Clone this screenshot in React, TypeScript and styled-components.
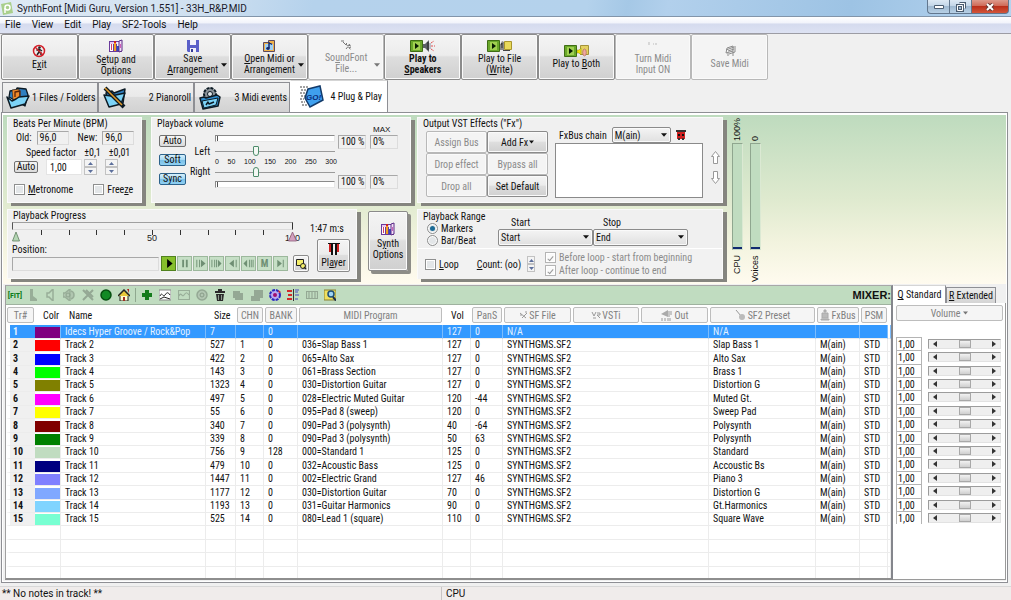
import React from "react";
import styled, { createGlobalStyle, css } from "styled-components";

const FONT = '"Liberation Sans Narrow", "Arial Narrow", "Roboto Condensed", "Liberation Sans", sans-serif';
const UI = 'Roboto, "Open Sans", sans-serif';
const ARIAL = '"Liberation Sans", Arial, sans-serif';
const GREEN = "#c0dcc0";

const Global = createGlobalStyle`
  *, *::before, *::after { box-sizing: border-box; }
  body { margin: 0; background: #f0f0f0; font: 10px/13px ${FONT}; color: #111; overflow: hidden; }
  button, input, select { font: inherit; color: inherit; margin: 0; padding: 0; border-radius: 0; }
  button { white-space: nowrap; }
  svg { display: block; flex: none; }
  u { text-underline-offset: 1px; }
`;

/* ---------- window frame ---------- */
const Window = styled.div`
  display: flex; flex-direction: column; height: 100vh; min-height: 560px; background: #f0f0f0;
`;
const TitleBar = styled.header`
  display: flex; align-items: center; flex: none; height: 17px; padding-left: 1px; gap: 4px;
  font: 10px/15px ${UI}; color: #1a1a2a;
  background: linear-gradient(100deg, #dfeaf4 0, #cfe0f0 20%, #b5d2ec 31%, #b4d2ec 58%, #a5c8e6 62%, #b2d0ec 66%, #9dc3e4 84%, #b5d3ee 100%);
  border-bottom: 1px solid #8295aa;
`;
const Title = styled.h1`margin: 0; font: inherit; flex: 1; white-space: nowrap;`;
const Caption = styled.div`display: flex; align-self: flex-start; margin-right: 2px;`;
const CaptionButton = styled.button<{ $close?: boolean }>`
  display: grid; place-items: center; height: 14px; width: ${p => (p.$close ? 38 : 22)}px;
  border: 1px solid #62778e; border-top: 0; border-right-width: ${p => (p.$close ? 1 : 0)}px;
  background: ${p => p.$close
    ? "linear-gradient(#dd9a8c 0, #cf6a58 45%, #bb2f1b 50%, #d3563a 100%)"
    : "linear-gradient(#dce8f3 0, #c3d6e8 45%, #9fb9d1 50%, #b7d0e6 100%)"};
  &:first-child { border-bottom-left-radius: 4px; }
  &:last-child { border-bottom-right-radius: 4px; }
`;
const MenuBar = styled.nav`
  display: flex; flex: none; height: 17px; padding-left: 5px; gap: 11px;
  font: 10px/16px ${UI}; border-bottom: 1px solid #9c9ca4;
  background: linear-gradient(#fff 0, #f2f4fb 35%, #d5dbee 45%, #dde2f3 100%);
`;
const MenuLink = styled.a`color: inherit; text-decoration: none;`;

/* ---------- main toolbar ---------- */
const Ribbon = styled.div`
  flex: none; display: grid; grid-template-columns: repeat(10, 1fr); width: 767px; height: 46px; margin-left: 1px;
`;
const Bevel = css`
  border: 1px solid #8b8b8b; border-radius: 2px;
  background: linear-gradient(#f4f4f4 0, #ececec 46%, #dedede 50%, #d0d0d0 100%);
  box-shadow: inset 0 0 0 1px #fafafa;
  &:disabled { background: #f4f4f4; border-color: #b8b8b8; color: #8b8b8b; }
`;
const RibbonButton = styled.button<{ $bold?: boolean }>`
  ${Bevel}
  display: flex; flex-direction: column; align-items: center; justify-content: center; gap: 1px;
  position: relative; line-height: 11px; font-weight: ${p => (p.$bold ? 700 : 400)};
`;
const DropArrow = styled.svg`position: absolute; right: 3px; top: 28px;`;

/* ---------- page tabs ---------- */
const Tabs = styled.div`flex: none; display: flex; align-items: flex-end; height: 32px; padding-left: 2px;`;
const Tab = styled.button<{ $active?: boolean }>`
  display: flex; align-items: center; justify-content: space-between;
  width: ${p => (p.$active ? 98 : 96)}px; height: ${p => (p.$active ? 32 : 30)}px;
  padding: ${p => (p.$active ? "0 5px 0 9px" : "0 2px 0 3px")};
  border: 1px solid #8e8f94; border-bottom: 0;
  background: ${p => (p.$active ? "#fff" : "linear-gradient(#f0f0f0 0, #eaeaea 46%, #dcdcdc 50%, #d2d2d2 100%)")};
  ${p => p.$active && css`border-color: #d5d5d5 #8e8f94 #fff #fff;`}
`;
const Page = styled.main`
  flex: 1; min-height: 0; display: flex; flex-direction: column; margin: 0 3px 3px 1px;
  border: 1px solid #8e8f94; background: #fff; padding: 2px 1px 1px;
`;
const Deck = styled.section`
  flex: none; display: flex; align-items: flex-start; gap: 6px; height: 169px; padding: 2px 4px 0;
  background: linear-gradient(#bedbbe 0, #dfeacf 50%, #f2f3de 75%, #fffbef 100%);
`;
const DeckColumn = styled.div`display: flex; flex-direction: column; gap: 6px;`;
const DeckRow = styled.div`display: flex; gap: 9px;`;

/* ---------- group boxes ---------- */
const Group = styled.section<{ $w: number; $h: number }>`
  width: ${p => p.$w}px; height: ${p => p.$h}px; background: #f0f0f0;
  border: 1px solid #fafafa; box-shadow: 4px 3px 0 #85857f;
`;
const GroupTitle = styled.h2`margin: 0; padding-left: 5px; font: inherit; line-height: 12px; white-space: nowrap;`;
const Row = styled.div<{ $h: number; $x?: number; $gap?: number; $top?: number }>`
  display: flex; align-items: center; height: ${p => p.$h}px; padding-left: ${p => p.$x ?? 0}px;
  gap: ${p => p.$gap ?? 0}px; margin-top: ${p => p.$top ?? 0}px; white-space: nowrap;
`;
const Sunken = styled.output<{ $w: number }>`
  display: block; width: ${p => p.$w}px; height: 14px; padding-left: 2px; line-height: 12px;
  border: 1px solid; border-color: #a8a8a8 #dcdcdc #dcdcdc #a8a8a8;
`;
const Field = styled.label`display: flex; align-items: center; gap: 5px; white-space: nowrap;`;
const SmallButton = styled.button<{ $on?: boolean; $w: number }>`
  width: ${p => p.$w}px; height: 12px; line-height: 10px; border: 1px solid ${p => (p.$on ? "#2c628b" : "#707070")}; border-radius: 2px;
  background: ${p => (p.$on ? "linear-gradient(#d6effb 0, #a5d8f3 48%, #7cc0e8 52%, #8fd0f2 100%)" : "linear-gradient(#f5f5f5, #dadada)")};
`;
const TextInput = styled.input`
  width: 36px; height: 16px; padding-left: 3px; border: 1px solid #e4e4e4; background: #fff;
`;
const Spin = styled.span<{ $w: number }>`
  display: grid; grid-template-rows: 8px 8px; width: ${p => p.$w}px;
  button { display: grid; place-items: center; border: 1px solid #c2c2c2; background: #f4f4f4; }
`;
const Check = styled.label<{ $off?: boolean }>`
  display: flex; align-items: center; gap: 3px; height: 13px; color: ${p => (p.$off ? "#8b8b8b" : "inherit")}; white-space: nowrap;
`;
const Box = styled.input`
  appearance: none; flex: none; width: 11px; height: 11px; border: 1px solid #8e8f8f;
  background: #e3e6e8; box-shadow: inset 0 0 0 1px #fff; display: grid; place-items: center;
  &:disabled { border-color: #b4b4b4; background: #fafafa; }
  &:checked::after { content: ""; width: 3px; height: 6px; border: solid #9a9a9a; border-width: 0 1px 1px 0; transform: rotate(40deg); }
  &[type="radio"] { border-radius: 50%; }
  &[type="radio"]:checked::after { width: 5px; height: 5px; border: 0; border-radius: 50%; background: #1d6b96; transform: none; }
`;

/* ---------- volume ---------- */
const VolumeBody = styled.div`display: flex; height: 72px; padding-left: 7px;`;
const Stack = styled.div<{ $w: number; $top?: number; $gap?: number }>`
  display: flex; flex-direction: column; flex: none; width: ${p => p.$w}px; padding-top: ${p => p.$top ?? 0}px; gap: ${p => p.$gap ?? 0}px;
`;
const ValueStack = styled.div`
  display: grid; grid-template-rows: 10px 14px 26px 14px; width: 32px; margin-top: -5px; padding-left: 3px;
  output:last-child { grid-row: 4; }
`;
const MaxLabel = styled.span`font: 8px/10px ${ARIAL}; padding-left: 3px;`;
const LevelBar = styled.div`
  height: 7px; border: 1px solid; border-color: #8a8a8a #e8e8e8 #e8e8e8 #8a8a8a; background: #fff;
  padding: 0 1px; &::before { content: ""; display: block; width: 1px; height: 5px; background: #555; }
`;
const Range = styled.input<{ $up?: boolean }>`
  appearance: none; display: block; width: 100%; height: 12px; background: linear-gradient(#9a9a9a, #9a9a9a) center / 100% 1px no-repeat;
  &::-webkit-slider-thumb {
    appearance: none; width: 6px; height: 10px; border: 1px solid #4d8c6b; background: #f4f8f4;
    border-radius: ${p => (p.$up ? "3px 3px 1px 1px" : "1px 1px 3px 3px")};
  }
`;
const Scale = styled.div`
  display: flex; justify-content: space-between; width: 122px; height: 9px; font-size: 7px; line-height: 9px; font-family: ${ARIAL};
`;

/* ---------- progress ---------- */
const ProgressBody = styled.div`display: flex; padding: 0 0 0 4px; height: 56px;`;
const Track = styled.div`height: 8px; width: 281px; border: 1px solid; border-color: #a0a0a0 #333 #dcdcdc #555;`;
const Transport = styled.div`display: flex; align-items: center; gap: 1px; margin-left: 2px;`;
const TransportButton = styled.button<{ $on?: boolean }>`
  display: grid; place-items: center; width: 15px; height: 15px; border: 1px solid ${p => (p.$on ? "#50821e" : "#9cb89c")};
  background: ${p => (p.$on ? "#86bf2c" : "#c6dfc6")}; color: ${p => (p.$on ? "#000" : "#6f8f74")};
`;
const Tool = styled.button<{ $w: number; $h: number }>`
  ${Bevel}
  display: flex; flex-direction: column; align-items: center; justify-content: center; gap: 2px;
  width: ${p => p.$w}px; height: ${p => p.$h}px; line-height: 11px;
`;
const Shadowed = styled(Tool)`margin: 2px 0 0 2px; box-shadow: inset 0 0 0 1px #fafafa, 3px 3px 0 #8d8d87;`;

/* ---------- effects and range ---------- */
const FxBody = styled.div`display: flex; padding-left: 8px;`;
const FxButtons = styled.div`display: grid; grid-template: repeat(3, 22px) / 61px 61px; margin-top: 1px;`;
const FxButton = styled.button`
  ${Bevel}
  display: flex; align-items: center; justify-content: center; gap: 1px;
`;
const FxBox = styled.div`height: 55px; width: 148px; border: 1px solid #8a8a8a; background: #fff;`;
const SelectWrap = styled.span<{ $w: number; $h: number }>`
  position: relative; display: block; width: ${p => p.$w}px; height: ${p => p.$h}px;
  select { ${Bevel} appearance: none; width: 100%; height: 100%; padding-left: 2px; background: linear-gradient(#f4f4f4, #e0e0e0); }
  svg { position: absolute; right: 4px; top: calc(50% - 2px); pointer-events: none; }
`;
const LoopPanel = styled.div`
  display: flex; align-items: center; height: 31px; margin-top: 1px; padding-left: 7px; border-top: 1px solid #fff; background: #f2f2f2;
`;
const MeterColumn = styled.div`
  display: flex; flex-direction: column; align-items: center; width: 10px; font: 10px/10px ${ARIAL};
`;
const Vertical = styled.span<{ $h: number; $end?: boolean }>`
  writing-mode: vertical-rl; transform: rotate(180deg); height: ${p => p.$h}px; line-height: 10px; font-size: 9px;
  text-align: ${p => (p.$end ? "left" : "right")}; padding-top: ${p => (p.$end ? 2 : 0)}px;
`;
const Meter = styled.div`
  width: 11px; height: 107px; border: 1px solid; border-color: #8fa68f #dbe9d3 #c8d8c8 #8fa68f; background: ${GREEN};
  display: flex; align-items: flex-end; margin-bottom: 5px;
  &::after { content: ""; height: 2px; flex: 1; background: #102a70; }
`;
const Meters = styled.div`display: flex; gap: 8px; margin-left: 3px;`;

/* ---------- track list ---------- */
const Lower = styled.section`flex: 1; min-height: 0; display: flex; background: #f0f0f0; padding-top: 1px;`;
const ListPane = styled.div`
  flex: 1; min-width: 0; display: flex; flex-direction: column; border: 1px solid #9a9a9a; border-width: 1px 2px 2px 1px;
  border-color: #a8a8a8 #84868c #8e8e8e #a0a0a0; margin: 0 0 1px 2px; background: #fff; overflow: hidden;
`;
const IconBar = styled.div`
  flex: none; display: flex; align-items: center; height: 19px; background: ${GREEN}; border-bottom: 1px solid #9fb29f;
`;
const IconGroup = styled.div<{ $n: number; $w: number }>`
  display: grid; grid-template-columns: repeat(${p => p.$n}, 1fr); width: ${p => p.$w}px;
`;
const IconButton = styled.button`
  display: grid; place-items: center; height: 17px; border: 0; background: none; color: #98ae98;
`;
const Fit = styled(IconButton)`width: 18px; font: bold 8px/17px ${FONT}; color: #0d7d1d;`;
const Divider = styled.i`width: 1px; height: 14px; margin: 0 2px; background: #8fa88f;`;
const MixerLabel = styled.span`margin-left: auto; font: bold 11px/17px ${ARIAL}; color: #111;`;

const rowHeights = css`
  height: 13px;
  &:nth-child(5n + 1), &:nth-child(5n + 3) { height: 14px; }
`;
const TrackTable = styled.table`
  width: 100%; table-layout: fixed; border-collapse: separate; border-spacing: 0; white-space: nowrap;
  th { height: 20px; padding: 1px; font-weight: 400; vertical-align: middle; }
  td { padding: 0 0 0 4px; line-height: 12px; border: solid #ececec; border-width: 0 1px 1px 0; overflow: hidden; }
`;
const PlainHead = styled.th`text-align: left; && { padding-left: 8px; }`;
const Tr = styled.tr<{ $selected?: boolean }>`
  ${rowHeights}
  ${p => p.$selected && css`
    background: #3399ff; color: #e4f2ff;
    td { border-right-color: #7cbcfc; }
    td:last-child { background: #fff; }
  `}
`;
const HeadButton = styled.button`
  display: flex; align-items: center; justify-content: center; gap: 1px; width: 100%; height: 16px;
  border: 1px solid #bdbdbd; border-radius: 2px; background: #f5f5f5; color: #808080; overflow: hidden;
`;
const Num = styled.td<{ $selected?: boolean; $filled: boolean }>`
  && { padding-left: 3px; font-weight: 700; border-right: 0; border-left: 4px solid #fff; background: ${p => (p.$selected ? "transparent" : p.$filled ? "#f0f0f0" : "#fff")}; }
`;
const Swatch = styled.i<{ $c: string }>`display: block; height: 11px; margin-top: 1px; background: ${p => p.$c};`;
const SwatchCell = styled.td`&& { padding: 0; }`;

/* ---------- mixer ---------- */
const MixerPane = styled.aside`flex: none; width: 113px; display: flex; flex-direction: column; margin-bottom: 1px;`;
const MixerTabs = styled.div`display: flex; align-items: flex-end; height: 18px;`;
const MixerTab = styled.button<{ $active?: boolean }>`
  height: ${p => (p.$active ? 18 : 16)}px; width: ${p => (p.$active ? 53 : 50)}px; border: 1px solid #8e8f94; border-bottom: 0;
  background: ${p => (p.$active ? "#fff" : "linear-gradient(#ececec, #d4d4d4)")};
  ${p => p.$active && css`border-color: #d5d5d5 #8e8f94 #fff #fff;`}
`;
const MixerBody = styled.div`
  flex: 1; background: #fff; border: 1px solid #9a9a9a; border-left: 0; border-width: 0 1px 1px 0; padding: 2px 2px 0 3px;
`;
const VolumeButton = styled(HeadButton)`margin-bottom: 2px; gap: 3px;`;
const Strips = styled.ul`list-style: none; margin: 0; padding: 0;`;
const Strip = styled.li`
  ${rowHeights}
  display: flex; align-items: center; justify-content: space-between;
`;
const Gain = styled.input`width: 26px; height: 100%; border: 1px solid #b4b4b4; border-bottom-width: 0; padding-left: 1px; background: #fff;`;
const Scroll = styled.div`
  display: flex; align-items: center; width: 73px; height: 10px; margin-right: 2px; padding: 0 4px; background: #efefef;
  border: 1px solid; border-color: #9c9c9c #e2e2e2 #e2e2e2 #9c9c9c;
  input { appearance: none; flex: 1; min-width: 0; height: 8px; background: none; }
  input::-webkit-slider-thumb { appearance: none; width: 12px; height: 8px; border: 1px solid #a8a8a8; background: linear-gradient(#f2f2f2, #cfcfcf); }
`;
const StatusBar = styled.footer`
  flex: none; display: flex; height: 14px; font: 10px/13px ${UI}; background: #f0eceb; border-top: 1px solid #d8d8d8;
`;
const StatusPart = styled.span<{ $w?: string }>`
  width: ${p => p.$w ?? "auto"}; padding-left: 2px; & + & { border-left: 1px solid #c8c4c4; padding-left: 4px; }
`;

/* ---------- helpers ---------- */
const Key = ({ t }: { t: string }) => {
  const i = t.indexOf("_");
  return i < 0 ? <>{t}</> : <>{t.slice(0, i)}<u>{t[i + 1]}</u>{t.slice(i + 2)}</>;
};
const Lines = ({ t }: { t: string }) => (
  <span>{t.split("|").map((l, i) => <React.Fragment key={l}>{i > 0 && <br />}<Key t={l} /></React.Fragment>)}</span>
);
const Down = ({ size = 7, c = "#111" }) => (
  <svg width={size} height="4" viewBox="0 0 7 4"><path d="M0 0h7L3.5 4z" fill={c} /></svg>
);
const Up = () => <svg width="5" height="3"><path d="M0 3h5L2.500 0z" fill="#5c6f9c" /></svg>;
const SpinBox = ({ w = 13, label }: { w?: number; label: string }) => (
  <Spin $w={w}>
    <button aria-label={`${label} up`}><Up /></button>
    <button aria-label={`${label} down`}><svg width="5" height="3"><path d="M0 0h5L2.500 3z" fill="#5c6f9c" /></svg></button>
  </Spin>
);
const Picker = ({ w, h, label, value }: { w: number; h: number; label: string; value: string }) => (
  <SelectWrap $w={w} $h={h}><select aria-label={label}><option>{value}</option></select><Down size={6} /></SelectWrap>
);

/* ---------- icons ---------- */
const ExitIcon = () => (
  <svg width="14" height="14" viewBox="0 0 14 14">
    <circle cx="7.500" cy="3.500" r="1.300" fill="#222" />
    <path d="M7 4.500v3.500l-2 3M7 8l2 1v2M7 5l3 2M7 5L4.500 6.500" stroke="#222" strokeWidth="1.500" fill="none" />
    <circle cx="7" cy="7" r="5.500" fill="none" stroke="#d3202a" strokeWidth="1.500" /><path d="M3 3l8 8" stroke="#d3202a" strokeWidth="1.300" />
  </svg>
);
const SetupIcon = () => (
  <svg width="14" height="14" viewBox="0 0 14 14">
    <path d="M0 2h13v11H0z" fill="#6a3a9c" /><path d="M1 3h8v2H1z" fill="#e9c8f0" /><path d="M1 5h3v7H1z" fill="#fff" />
    <path d="M2 5h1v6H2z" fill="#d33a68" /><path d="M5 4h2v8H5z" fill="#f0a020" /><path d="M8 3h2v4H8z" fill="#f5f0ff" /><path d="M8 7h2v5H8z" fill="#2a50c0" />
    <path d="M10 2l3-1v11l-3 1z" fill="#f3dff7" stroke="#5a2a86" /><path d="M11 5h1v4h-1z" fill="#d060b8" /><path d="M5 2h2v2H5z" fill="#d02020" />
  </svg>
);
const SaveIcon = () => (
  <svg width="12" height="12" viewBox="0 0 12 12"><path d="M0 0h12v12H1l-1-1z" fill="#5a5fc8" /><path d="M3 0h6v5H3zM3 8h6v4H3z" fill="#f2f2fa" /><path d="M4 9h2v3H4z" fill="#353a98" /></svg>
);
const OpenIcon = () => (
  <svg width="13" height="12" viewBox="0 0 13 12"><path d="M.5 2.500h5v-2h6v11H.5z" fill="#f0b24a" stroke="#5c4a60" /><path d="M2 4h8v6H2z" fill="#9fd0f5" /><path d="M6 2v6M6 2.500l3 2" stroke="#14286e" strokeWidth="1.500" fill="none" /><ellipse cx="5" cy="8.500" rx="1.800" ry="1.400" fill="#14286e" /></svg>
);
const FontIcon = () => (
  <svg width="11" height="11" viewBox="0 0 11 11" stroke="#777" fill="none"><path d="M0 1h3M2 2l3 3M4 5l2-2M5 4l5 6M5 9l4-5M7 5l3 1M8 8l2-1" strokeDasharray="3 1" /></svg>
);
const Speaker = () => (
  <svg width="12" height="12" viewBox="0 0 12 12"><path d="M0 4h2l4-4v12L2 8H0z" fill="#5d6068" /><path d="M5 2v8" stroke="#222" /><path d="M7 3v6" stroke="#889" /><path d="M8 3l3-2M8 6h4M8 9l3 2" stroke="#e05050" strokeDasharray="2 1" /></svg>
);
const PlayBox = styled.span`display: flex; align-items: center;`;
const PlayIcon = () => (
  <svg width="13" height="12" viewBox="0 0 13 12"><path d="M.5.500h12v11H.5z" fill="#6aa82a" stroke="#3f6d14" /><path d="M3 2h7v8H3z" fill="#a0d050" /><path d="M5 3l4 3-4 3z" fill="#071a02" /></svg>
);
const FolderMini = () => (
  <svg width="12" height="12" viewBox="0 0 12 12"><path d="M4.500 1.500h7v8h-7z" fill="#e8d95a" stroke="#a8952c" /><path d="M0 5l2-4 2 1v8H0z" fill="#8a8a8a" /><path d="M1 5l1-2v5" fill="none" stroke="#333" /><path d="M3 10h7v1H3z" fill="#444" /></svg>
);
const BothMini = () => (
  <svg width="12" height="12" viewBox="0 0 12 12"><path d="M3.500.500h8v9h-8z" fill="#e4d060" stroke="#a3923a" /><path d="M0 5h2l2-2v7L2 8H0z" fill="#f3e500" stroke="#8a8a20" strokeWidth=".5" /><ellipse cx="7.500" cy="7.500" rx="1.800" ry="3.500" fill="#f0a8a0" stroke="#a06050" strokeWidth=".6" /></svg>
);
const MidiInIcon = () => <svg width="10" height="12"><path d="M1 2v3M5 4h1M7 4h2" stroke="#bbb" fill="none" /></svg>;
const SaveMidiIcon = () => (
  <svg width="12" height="12" viewBox="0 0 12 12" stroke="#8c8c8c" fill="none"><path d="M3 3l6-2v5L2 8zM2 5l8-3M4 6l6-2M9 6v5M11 1v6L5 9M4 8v3" /></svg>
);
const FilesIcon = () => (
  <svg width="26" height="22" viewBox="0 0 26 22" stroke="#0c1a24" strokeLinejoin="round"><path d="M3 10l1-6 6-1 1-2 9 1 2 6-3 11z" fill="#2f7fc0" strokeWidth="1.300" /><path d="M6 3l7-1 1 9-7 2z" fill="#f08a2a" strokeWidth=".6" /><path d="M9 10V5l5-1v5" fill="none" stroke="#5a2408" strokeWidth="1.300" /><path d="M1 10l5 4 4-2 3-2 10-1-4 8-14 4z" fill="#7cd3f7" strokeWidth="1.500" /></svg>
);
const RollIcon = () => (
  <svg width="26" height="24" viewBox="0 0 26 24" stroke="#0c1a24" strokeLinejoin="round"><path d="M4 7l6-2 2 2 11-4-2 14-14 3z" fill="#2f7fc0" strokeWidth="1.500" /><path d="M2 9l7 1 14-3-4 11-12 3z" fill="#7cd3f7" strokeWidth="1.500" /><path d="M3 2l19 19" strokeWidth="4" /><path d="M3 2l17 17" stroke="#e09a2c" strokeWidth="1.600" /></svg>
);
const EventsIcon = () => (
  <svg width="24" height="24" viewBox="0 0 24 24" stroke="#0c1a24" strokeLinejoin="round"><circle cx="12" cy="8" r="6" fill="#8a9298" strokeWidth="2" strokeDasharray="3 1" /><circle cx="12" cy="8" r="2.500" fill="#dfe5e8" /><path d="M2 12l4-1 2 1 11-3 3 2-2 9-15 3z" fill="#2f8fd0" strokeWidth="1.500" /><path d="M4 15l16-3-2 7-12 3z" fill="#7cd3f7" strokeWidth="1" /><path d="M8 19l2-3 1 2 5-2" fill="none" strokeWidth="1.500" /></svg>
);
const GoIcon = () => (
  <svg width="24" height="24" viewBox="0 0 24 24"><path d="M0 2h8M1 5h6M0 8h5M1 11h4M0 14h4M1 17h4M2 20h6" stroke="#444" strokeDasharray="2 1" /><path d="M8 4l12-3 3 14-13 7-5-9z" fill="#3fa0ee" stroke="#123a6a" strokeWidth="1.500" /><text x="6" y="15" fontFamily="Liberation Sans" fontSize="8" fontWeight="700" fontStyle="italic" fill="#0a2a78">GO!</text></svg>
);
const TransportPaths = [
  "M4 1l6 5-6 5z", "M3 2h2v8H3zM7 2h2v8H7z", "M1 2h1v8H1zM4 2h1v8H4zM6 2l5 4-5 4z", "M0 2h1v8H0zM3 2h1v8H3zM5 2h1v8H5zM7 2l4 4-4 4z",
  "M7 2L2 6l5 4zM9 2h1v8H9z", "M4 2L0 6l4 4zM6 2h1v8H6zM8 2h1v8H8zM10 2h1v8h-1z", "", "M2 2l5 4-5 4zM8 2h1v8H8z",
];
const TransportNames = ["Play", "Pause", "Step", "Fast forward", "Step back", "Rewind", "Marker", "To end"];

const ListIcons: { name: string; art: React.ReactNode }[] = [
  { name: "Foot", art: <path d="M3 0h3v7l4 3v2H3z" fill="#98ae98" /> },
  { name: "Sound", art: <path d="M2 4h2l4-4v12L4 8H2z" fill="none" stroke="#98ae98" strokeWidth="1.500" /> },
  { name: "Mute", art: <><path d="M0 4h2l5-4v12L2 8H0zM8 2c4 1 4 7 0 8" fill="#b0c6b0" stroke="#98ae98" strokeWidth="1.500" /><circle cx="5" cy="6" r="2" fill="none" stroke="#8ea48e" /></> },
  { name: "Remove", art: <path d="M1 1l10 10M11 1L1 11M4 1l7 7" stroke="#94a894" strokeWidth="2" fill="none" /> },
  { name: "Record", art: <circle cx="6" cy="6" r="5" fill="#128a25" stroke="#064f10" strokeWidth="1.500" /> },
  { name: "Home", art: <><path d="M2 6h8v6H2z" fill="#fffbd0" stroke="#222" /><path d="M0 7l6-6 6 6" fill="#e8c83a" stroke="#222" strokeWidth="1.500" /><path d="M5 8h2v4H5z" fill="#a03020" /><path d="M9 0h2v4z" fill="#b02020" /></> },
];
const ListIcons2: { name: string; art: React.ReactNode }[] = [
  { name: "Add", art: <path d="M4 1h4v3h3v4H8v3H4V8H1V4h3z" fill="#157c1c" /> },
  { name: "Curve", art: <><path d="M0 1h12v10H0z" fill="#fff" stroke="#888" /><path d="M1 7c2-5 3 2 5-1s3-3 5 0M1 10l4-2 6 2" fill="none" stroke="#222" /></> },
  { name: "Curve copy", art: <path d="M.5 1.500h11v9H.5zM1 7c2-5 3 2 5-1s3-3 5 0" fill="none" stroke="#98ae98" strokeWidth="1.200" /> },
  { name: "Spiral", art: <><circle cx="6" cy="6" r="5" fill="#b2c6b2" stroke="#94a894" strokeWidth="1.500" /><circle cx="6" cy="6" r="2" fill="none" stroke="#889c88" /></> },
  { name: "Delete", art: <><path d="M1 2h3V0h4v2h3v2H1zM2 5h8l-1 7H3z" fill="#2a2a2a" /><path d="M4.500 6v5M7.500 6v5" stroke="#8a9a8a" /></> },
  { name: "Copy", art: <path d="M1 2h7v2h3v7H3V9H1z" fill="#94a894" /> },
  { name: "Paste", art: <path d="M3 1h9v8H9v3H0V7h3z" fill="#94a894" /> },
  { name: "Pan", art: <><circle cx="6" cy="6" r="5" fill="#b8a8f0" stroke="#2a2ac0" strokeWidth="2" strokeDasharray="3 1" /><circle cx="6" cy="6" r="2" fill="#a01070" /><path d="M9 1l3 2-2 1z" fill="#e02020" /></> },
  { name: "Bars", art: <><path d="M0 1h5v2H0zM1 5h4v2H1zM0 9h5v2H0z" fill="#d02a2a" /><path d="M6.500 0v12" stroke="#333" /><path d="M8 1h4M8 3h3M8 6h4M8 10h3" stroke="#4a4ac0" /></> },
  { name: "Keys", art: <path d="M.5 2.500h11v7H.5zM3 3v6M6 3v6M9 3v6" fill="none" stroke="#94a894" strokeWidth="1.200" /> },
  { name: "Find", art: <><path d="M0 1h12v10H0z" fill="#f0e060" stroke="#8a8030" /><circle cx="7" cy="5" r="3" fill="#9fd4f4" stroke="#1d4f7a" strokeWidth="1.500" /><path d="M9 8l3 3.500" stroke="#1d2f4a" strokeWidth="2" /></> },
];
const Glyph = ({ children }: { children: React.ReactNode }) => <svg width="12" height="12" viewBox="0 0 12 12">{children}</svg>;

/* ---------- data ---------- */
type Track = [string, string, string, string, string, string, string, string, string];
const tracks: Track[] = [
  ["#800080", "Idecs Hyper Groove / Rock&Pop", "7", "", "0", "", "127", "0", "N/A"],
  ["#ff0000", "Track 2", "527", "1", "0", "036=Slap Bass 1", "127", "0", "Slap Bass 1"],
  ["#0000ff", "Track 3", "422", "2", "0", "065=Alto Sax", "127", "0", "Alto Sax"],
  ["#00ff00", "Track 4", "143", "3", "0", "061=Brass Section", "127", "0", "Brass 1"],
  ["#808000", "Track 5", "1323", "4", "0", "030=Distortion Guitar", "127", "0", "Distortion G"],
  ["#ff00ff", "Track 6", "497", "5", "0", "028=Electric Muted Guitar", "120", "-44", "Muted Gt."],
  ["#ffff00", "Track 7", "55", "6", "0", "095=Pad 8 (sweep)", "120", "0", "Sweep Pad"],
  ["#800000", "Track 8", "340", "7", "0", "090=Pad 3 (polysynth)", "40", "-64", "Polysynth"],
  ["#008000", "Track 9", "339", "8", "0", "090=Pad 3 (polysynth)", "50", "63", "Polysynth"],
  ["#c0dcc0", "Track 10", "756", "9", "128", "000=Standard 1", "125", "0", "Standard"],
  ["#000080", "Track 11", "479", "10", "0", "032=Acoustic Bass", "125", "0", "Accoustic Bs"],
  ["#8080ff", "Track 12", "1447", "11", "0", "002=Electric Grand", "127", "46", "Piano 3"],
  ["#80a8ff", "Track 13", "1177", "12", "0", "030=Distortion Guitar", "70", "0", "Distortion G"],
  ["#80d4ff", "Track 14", "1193", "13", "0", "031=Guitar Harmonics", "90", "0", "Gt.Harmonics"],
  ["#78ffd2", "Track 15", "525", "14", "0", "080=Lead 1 (square)", "110", "0", "Square Wave"],
];
const columns: { w?: number; t: string; plain?: boolean; icon?: React.ReactNode }[] = [
  { w: 29, t: "Tr#" }, { w: 26, t: "Colr", plain: true }, { t: "Name", plain: true }, { w: 30, t: "Size", plain: true },
  { w: 28, t: "CHN" }, { w: 34, t: "BANK" }, { w: 145, t: "MIDI Program" }, { w: 28, t: "Vol", plain: true }, { w: 32, t: "PanS" },
  { w: 69, t: "SF File", icon: <svg width="9" height="9" stroke="#999" fill="none"><path d="M1 2l6 5M3 7l5-5M1 4h2M6 1h2" /></svg> },
  { w: 68, t: "VSTi", icon: <svg width="10" height="9" stroke="#999" fill="none"><path d="M1 1l2 4 2-4M6 2h3v2H6l3 3M2 7h3" /></svg> },
  { w: 69, t: "Out", icon: <svg width="13" height="11"><path d="M0 4l7-4v7z" fill="#aaa" /><path d="M8 1v6M10 1v4M1 8v3M4 8v3M7 8v3M9 8v3" stroke="#999" /></svg> },
  { w: 107, t: "SF2 Preset", icon: <svg width="12" height="12"><path d="M1 1l5 6" stroke="#999" /><ellipse cx="7" cy="8" rx="3" ry="3" fill="#bbb" /></svg> },
  { w: 44, t: "FxBus", icon: <svg width="10" height="12"><path d="M2 4h6v5H2zM4 1h2v2H4zM1 10h8v1H1z" fill="#bbb" stroke="#aaa" /></svg> },
  { w: 28, t: "PSM" }, { w: 3, t: "", plain: true },
];
const blanks = [1, 2, 3, 4];

const ribbon: { t: string; icon: React.ReactNode; off?: boolean; bold?: boolean; drop?: boolean }[] = [
  { t: "E_xit", icon: <ExitIcon /> },
  { t: "S_etup and|Options", icon: <SetupIcon /> },
  { t: "Save|_Arrangement", icon: <SaveIcon />, drop: true },
  { t: "_Open Midi or|Arrangement", icon: <OpenIcon />, drop: true },
  { t: "So_undFont|File...", icon: <FontIcon />, off: true, drop: true },
  { t: "Play to|_Speakers", icon: <PlayBox><PlayIcon /><Speaker /></PlayBox>, bold: true },
  { t: "Play to File|(_Write)", icon: <PlayBox><PlayIcon /><FolderMini /></PlayBox> },
  { t: "Play to _Both", icon: <PlayBox><PlayIcon /><BothMini /></PlayBox> },
  { t: "Turn Midi|Input ON", icon: <MidiInIcon />, off: true },
  { t: "Save Midi", icon: <SaveMidiIcon />, off: true },
];

const BpmGroup = () => (
  <Group $w={135} $h={86}>
    <GroupTitle>Beats Per Minute (BPM)</GroupTitle>
    <Row $h={15} $x={8} $gap={9}>
      <Field>Old: <Sunken $w={32}>96,0</Sunken></Field>
      <Field>New: <Sunken $w={32}>96,0</Sunken></Field>
    </Row>
    <Row $h={13} $x={18} $top={1} $gap={8}><label htmlFor="speed">Speed factor</label><span>±0,1</span><span>±0,01</span></Row>
    <Row $h={16} $x={6} $gap={8}>
      <SmallButton $w={24}>Auto</SmallButton>
      <Row $h={16} $gap={2}><TextInput id="speed" defaultValue="1,00" /><SpinBox label="Coarse speed" /></Row>
      <SpinBox label="Fine speed" />
    </Row>
    <Row $h={13} $x={6} $top={8} $gap={20}>
      <Check><Box type="checkbox" /><span><Key t="_Metronome" /></span></Check>
      <Check><Box type="checkbox" /><span><Key t="Free_ze" /></span></Check>
    </Row>
  </Group>
);

const VolumeGroup = () => (
  <Group $w={260} $h={86}>
    <GroupTitle>Playback volume</GroupTitle>
    <VolumeBody>
      <Stack $w={31} $top={5} $gap={7}>
        <SmallButton $w={27}>Auto</SmallButton><SmallButton $w={27} $on>Soft</SmallButton><SmallButton $w={27} $on>Sync</SmallButton>
      </Stack>
      <Stack $w={25} $top={15} $gap={7}><label htmlFor="left">&nbsp; Left</label><label htmlFor="right">Right</label></Stack>
      <Stack $w={120} $top={5}>
        <LevelBar />
        <Row $h={3} />
        <Range id="left" type="range" max={300} defaultValue={100} />
        <Scale><span>0</span><span>50</span><span>100</span><span>150</span><span>200</span><span>250</span><span>300</span></Scale>
        <Range id="right" type="range" max={300} defaultValue={100} $up />
        <Row $h={3} />
        <LevelBar />
      </Stack>
      <ValueStack><span /><Sunken $w={28}>100 %</Sunken><Sunken $w={28}>100 %</Sunken></ValueStack>
      <ValueStack><MaxLabel>MAX</MaxLabel><Sunken $w={28}>0%</Sunken><Sunken $w={28}>0%</Sunken></ValueStack>
    </VolumeBody>
  </Group>
);

const Ruler = () => (
  <svg width="298" height="14" viewBox="0 0 298 14" fontFamily="Liberation Sans" fontSize="9" fill="#222">
    <path d="M29.500 0v5M57.500 0v5M84.500 0v5M112.500 0v5M140.500 0v5M168.500 0v5M196.500 0v5M223.500 0v5M251.500 0v5" stroke="#333" />
    <text x="135" y="11">50</text><text x="273" y="11">100</text>
    <path d="M4 2l3.500 9h-7z" fill="#b5d6b5" stroke="#5d7d5d" strokeWidth=".8" /><path d="M280.500 2l4 9h-8z" fill="#d2a0be" stroke="#8c5a78" strokeWidth=".8" />
  </svg>
);

const ProgressGroup = () => (
  <Group $w={350} $h={70}>
    <GroupTitle>Playback Progress</GroupTitle>
    <ProgressBody>
      <Stack $w={298}>
        <Track />
        <Ruler />
        <Row $h={11}>Position:</Row>
        <Row $h={17}>
          <Sunken $w={147} />
          <Transport>
            {TransportNames.map((n, i) => (
              <TransportButton key={n} aria-label={n} $on={i === 0}>
                {TransportPaths[i] ? <svg width="11" height="11" viewBox="0 0 11 12"><path d={TransportPaths[i]} fill="currentColor" /></svg> : <b>M</b>}
              </TransportButton>
            ))}
          </Transport>
          <Row $h={17} $x={5}>
            <Tool $w={16} $h={17} aria-label="Notes">
              <svg width="12" height="12" viewBox="0 0 12 12"><path d="M1.500 1.500h7v6h-7z" fill="#f4ee6a" stroke="#222" /><circle cx="8" cy="8" r="2.500" fill="#f4ee6a" stroke="#222" /><path d="M9 9l2 2" stroke="#222" strokeWidth="1.500" /></svg>
            </Tool>
          </Row>
        </Row>
      </Stack>
      <Stack $w={42} $gap={4}>
        <span>1:47 m:s</span>
        <Row $h={33} $x={7}>
          <Tool $w={33} $h={33}>
            <svg width="12" height="12" viewBox="0 0 12 12"><path d="M1 0h10v9H1z" fill="#d02020" /><path d="M3 0h2v12H3zM7 0h2v12H7z" fill="#111" /><path d="M5 0h2v12H5z" fill="#f0f0f0" /><path d="M0 0h12v1H0z" fill="#111" /></svg>
            <span><Key t="Pl_ayer" /></span>
          </Tool>
        </Row>
      </Stack>
    </ProgressBody>
  </Group>
);

const FxGroup = () => (
  <Group $w={306} $h={86}>
    <GroupTitle>Output VST Effects ("Fx")</GroupTitle>
    <FxBody>
      <FxButtons>
        <FxButton disabled>Assign Bus</FxButton><FxButton>Add Fx<Down size={5} /></FxButton>
        <FxButton disabled>Drop effect</FxButton><FxButton disabled>Bypass all</FxButton>
        <FxButton disabled>Drop all</FxButton><FxButton>Set Default</FxButton>
      </FxButtons>
      <Row $h={68} $x={7} $gap={6}>
        <Stack $w={150}>
          <Row $h={16} $x={4} $gap={5} $top={-3}>
            <span>FxBus chain</span><Picker w={59} h={16} label="FxBus chain" value="M(ain)" />
            <svg width="10" height="10" viewBox="0 0 10 10"><path d="M1 1h8v8H1z" fill="#d02020" /><path d="M0 0h10v2H0zM2 8h2v2H2zM6 8h2v2H6z" fill="#333" /><path d="M2 4h2v2H2zM6 4h2v2H6z" fill="#111" /></svg>
          </Row>
          <FxBox />
        </Stack>
        <Stack $w={10} $top={6} $gap={7}>
          <svg width="9" height="13" fill="#fff" stroke="#999"><path d="M4.500.500l4 5h-2v7h-4v-7h-2z" /></svg>
          <svg width="9" height="13" fill="#fff" stroke="#999"><path d="M4.500 12.500l4-5h-2v-7h-4v7h-2z" /></svg>
        </Stack>
      </Row>
    </FxBody>
  </Group>
);

const RangeGroup = () => (
  <Group $w={306} $h={70}>
    <Row $h={37}>
      <Stack $w={80}>
        <GroupTitle>Playback Range</GroupTitle>
        <Row $h={12} $x={9}><Check><Box type="radio" name="mode" defaultChecked /><span>Markers</span></Check></Row>
        <Row $h={12} $x={9}><Check><Box type="radio" name="mode" /><span>Bar/Beat</span></Check></Row>
      </Stack>
      <Stack $w={95} $top={5}><Row $h={12} $x={13}>Start</Row><Picker w={95} h={17} label="Start" value="Start" /></Stack>
      <Stack $w={95} $top={5}><Row $h={12} $x={10}>Stop</Row><Picker w={95} h={17} label="Stop" value="End" /></Stack>
    </Row>
    <LoopPanel>
      <Row $h={26} $gap={18}>
        <Check><Box type="checkbox" /><span><Key t="_Loop" /></span></Check>
        <Row $h={16} $gap={6}><span><Key t="_Count: (oo)" /></span><SpinBox w={8} label="Count" /></Row>
      </Row>
      <Row $h={26} $x={10}>
        <Stack $w={150}>
          <Check $off><Box type="checkbox" defaultChecked disabled />Before loop - start from beginning</Check>
          <Check $off><Box type="checkbox" defaultChecked disabled />After loop - continue to end</Check>
        </Stack>
      </Row>
    </LoopPanel>
  </Group>
);

const IconSet = ({ items, w }: { items: typeof ListIcons; w: number }) => (
  <IconGroup $n={items.length} $w={w}>
    {items.map(i => <IconButton key={i.name} aria-label={i.name}><Glyph>{i.art}</Glyph></IconButton>)}
  </IconGroup>
);

export default function App() {
  return (
    <Window>
      <Global />
      <TitleBar>
        <svg width="12" height="13" viewBox="0 0 12 13"><path d="M0 2l10-2 2 11-10 2z" fill="#a9cf8c" /><circle cx="6.500" cy="5.500" r="2.500" fill="none" stroke="#fff" strokeWidth="1.500" /><path d="M4 6v5" stroke="#fff" strokeWidth="1.500" /></svg>
        <Title>SynthFont [Midi Guru, Version 1.551] - 33H_R&amp;P.MID</Title>
        <Caption>
          <CaptionButton aria-label="Minimize"><svg width="10" height="4"><path d="M.5.500h9v3h-9z" fill="#fff" stroke="#4a5c70" /></svg></CaptionButton>
          <CaptionButton aria-label="Restore"><svg width="10" height="10"><path d="M3.500 1.500h5v5M1.500 3.500h5v5h-5z" fill="none" stroke="#4a5c70" strokeWidth="3" /><path d="M3.500 1.500h5v5M1.500 3.500h5v5h-5z" fill="none" stroke="#fff" /></svg></CaptionButton>
          <CaptionButton $close aria-label="Close"><svg width="10" height="8"><path d="M2 1l6 6M8 1L2 7" stroke="#6a3a34" strokeWidth="4" /><path d="M2 1l6 6M8 1L2 7" stroke="#fff" strokeWidth="2" /></svg></CaptionButton>
        </Caption>
      </TitleBar>
      <MenuBar>
        {["File", "View", "Edit", "Play", "SF2-Tools", "Help"].map(m => <MenuLink key={m} href="#">{m}</MenuLink>)}
      </MenuBar>
      <Ribbon>
        {ribbon.map(b => (
          <RibbonButton key={b.t} disabled={b.off} $bold={b.bold}>
            {b.icon}<Lines t={b.t} />
            {b.drop && <DropArrow width="6" height="4" viewBox="0 0 7 4"><path d="M0 0h7L3.500 4z" fill={b.off ? "#777" : "#111"} /></DropArrow>}
          </RibbonButton>
        ))}
      </Ribbon>
      <Tabs>
        <Tab><FilesIcon />1 Files / Folders</Tab>
        <Tab><RollIcon />2 Pianoroll</Tab>
        <Tab><EventsIcon />3 Midi events</Tab>
        <Tab $active><GoIcon />4 Plug &amp; Play</Tab>
      </Tabs>
      <Page>
        <Deck>
          <DeckColumn>
            <DeckRow><BpmGroup /><VolumeGroup /></DeckRow>
            <DeckRow>
              <ProgressGroup />
              <Shadowed $w={40} $h={60}><SetupIcon /><Lines t="S_ynth|Options" /></Shadowed>
            </DeckRow>
          </DeckColumn>
          <DeckColumn><FxGroup /><RangeGroup /></DeckColumn>
          <Meters>
            <MeterColumn><Vertical $h={26} $end>100%</Vertical><Meter /><Vertical $h={28}>CPU</Vertical></MeterColumn>
            <MeterColumn><Vertical $h={26} $end>0</Vertical><Meter /><Vertical $h={30}>Voices</Vertical></MeterColumn>
          </Meters>
        </Deck>
        <Lower>
          <ListPane>
            <IconBar>
              <Fit>[FIT]</Fit>
              <IconSet items={ListIcons} w={109} />
              <Divider />
              <IconSet items={ListIcons2} w={201} />
              <MixerLabel>MIXER:</MixerLabel>
            </IconBar>
            <TrackTable>
              <colgroup>{columns.map(c => <col key={c.t} style={c.w ? { width: c.w } : undefined} />)}</colgroup>
              <thead>
                <tr>{columns.map(c => c.plain ? <PlainHead key={c.t}>{c.t}</PlainHead> : <th key={c.t}><HeadButton>{c.icon}{c.t}</HeadButton></th>)}</tr>
              </thead>
              <tbody>
                {tracks.map(([c, name, size, chn, bank, prog, vol, pan, preset], i) => (
                  <Tr key={name} $selected={i === 0}>
                    <Num $filled $selected={i === 0}>{i + 1}</Num>
                    <SwatchCell><Swatch $c={c} /></SwatchCell>
                    <td>{name}</td><td>{size}</td><td>{chn}</td><td>{bank}</td><td>{prog}</td><td>{vol}</td><td>{pan}</td>
                    <td colSpan={3}>{i ? "SYNTHGMS.SF2" : "N/A"}</td><td>{preset}</td>
                    <td>{i ? "M(ain)" : ""}</td><td>{i ? "STD" : ""}</td><td />
                  </Tr>
                ))}
                {blanks.map(b => (
                  <Tr key={b}>
                    <Num $filled={false} /><td /><td /><td /><td /><td /><td /><td /><td /><td colSpan={3} /><td /><td /><td /><td />
                  </Tr>
                ))}
              </tbody>
            </TrackTable>
          </ListPane>
          <MixerPane>
            <MixerTabs>
              <MixerTab $active><Key t="_Q Standard" /></MixerTab>
              <MixerTab><Key t="_R Extended" /></MixerTab>
            </MixerTabs>
            <MixerBody>
              <VolumeButton>Volume <Down size={5} c="#777" /></VolumeButton>
              <Strips>
                {tracks.map(([, name], i) => (
                  <Strip key={name}>
                    {i > 0 && <>
                      <Gain aria-label={`${name} gain`} defaultValue="1,00" />
                      <Scroll>
                        <svg width="4" height="6"><path d="M4 0v6L0 3z" fill="#333" /></svg>
                        <input type="range" aria-label={`${name} volume`} />
                        <svg width="4" height="6"><path d="M0 0v6l4-3z" fill="#333" /></svg>
                      </Scroll>
                    </>}
                  </Strip>
                ))}
              </Strips>
            </MixerBody>
          </MixerPane>
        </Lower>
      </Page>
      <StatusBar><StatusPart $w="441px">** No notes in track! **</StatusPart><StatusPart>CPU</StatusPart></StatusBar>
    </Window>
  );
}
